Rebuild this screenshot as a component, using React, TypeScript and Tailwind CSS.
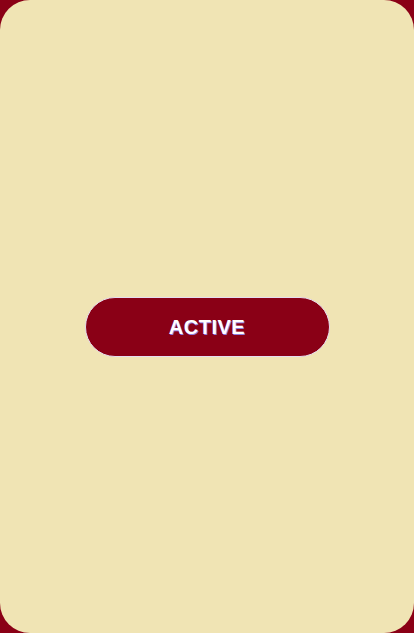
export default function App() {
  return (
    <div className="w-[414px] h-[633px] bg-[#8a0016]">
      <div className="w-full h-full rounded-[30px] bg-[#f0e4b4] flex items-center justify-center">
        <button
          className="w-[245px] h-[60px] mt-[20px] rounded-full bg-[#8a0016] border border-[#e6dcf0] flex items-center justify-center text-white font-bold text-[20px] tracking-[0.5px]"
          style={{ fontFamily: '"Liberation Sans", Arial, sans-serif', textShadow: '1px 1px 0 #8f7fe0' }}
        >
          ACTIVE
        </button>
      </div>
    </div>
  );
}
